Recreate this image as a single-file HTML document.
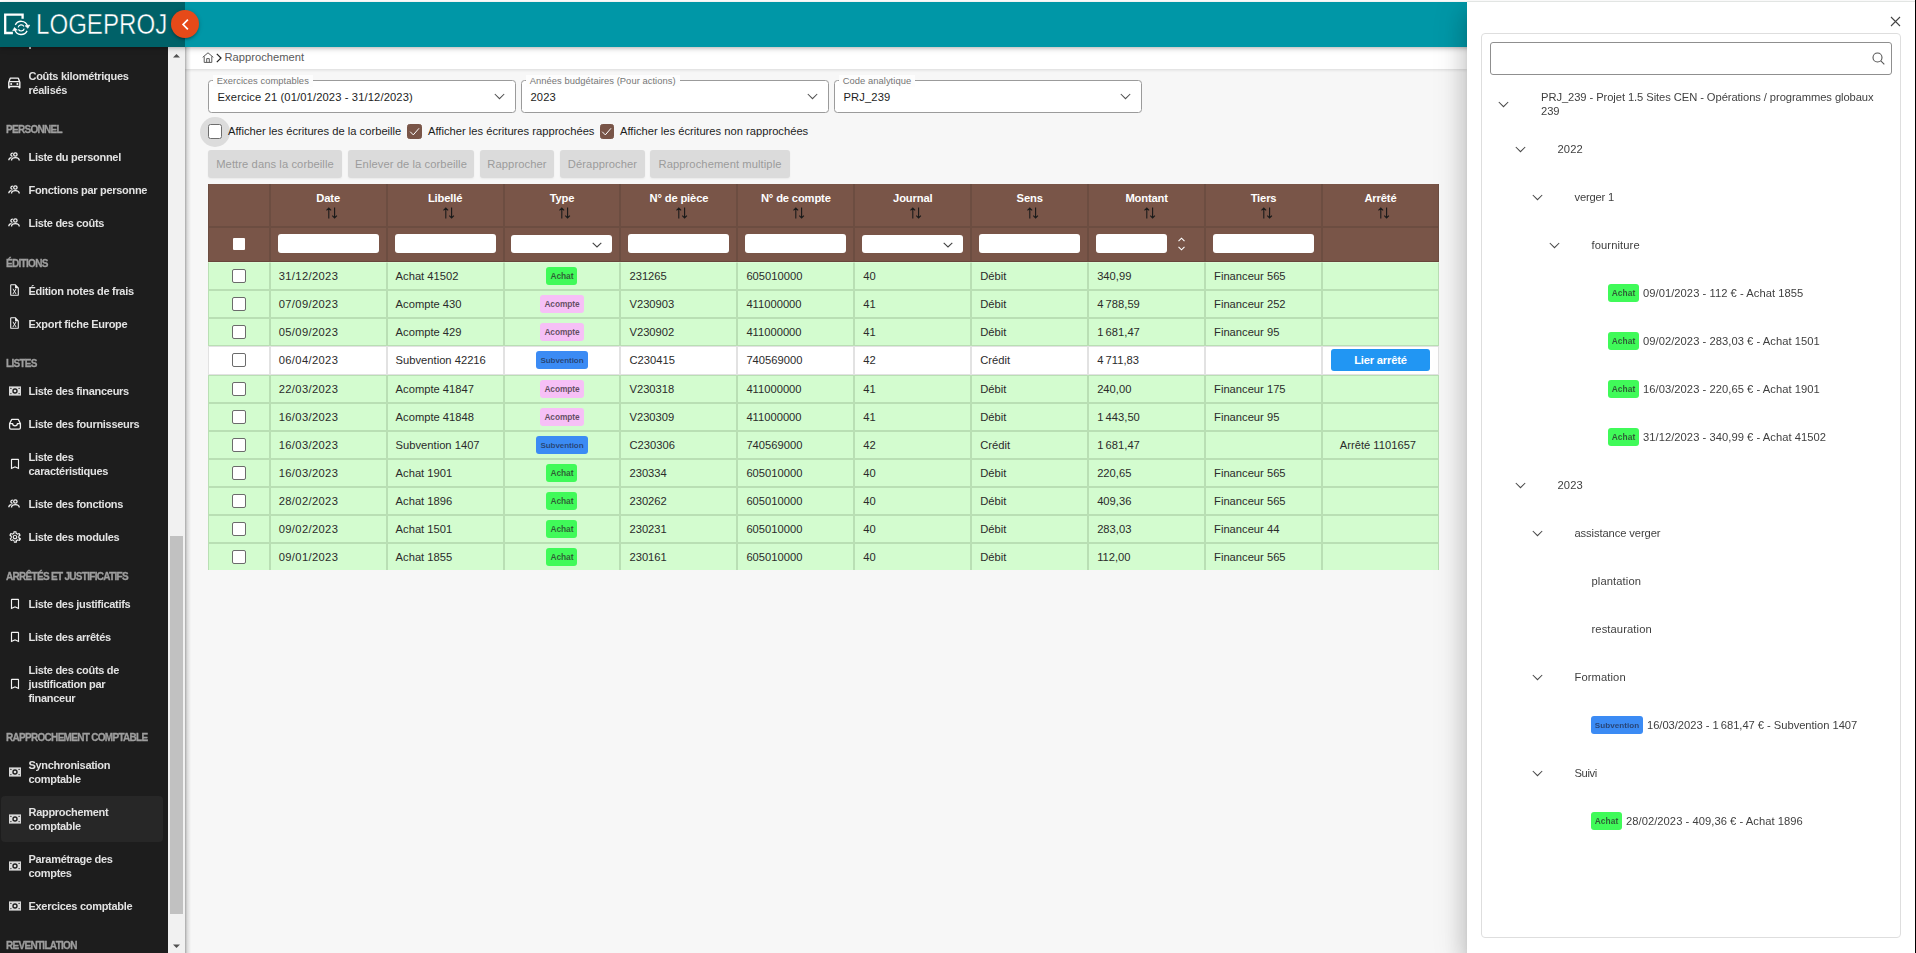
<!DOCTYPE html>
<html lang="fr">
<head>
<meta charset="utf-8">
<title>LOGEPROJ - Rapprochement</title>
<style>
*{box-sizing:border-box}
html,body{margin:0;padding:0}
body{width:1916px;height:953px;overflow:hidden;position:relative;background:#fff;
  font-family:"Liberation Sans",sans-serif;font-size:11.2px;color:#1d1d1d;line-height:1.2}
svg{display:block}
.abs{position:absolute}
/* ---------- top strip / right edge ---------- */
#topline{position:absolute;left:1467px;top:1px;width:448px;height:1px;background:#e2e5e3;z-index:50}
#rightedge{position:absolute;left:1915px;top:0;width:1px;height:953px;background:#000;z-index:60}
/* ---------- header ---------- */
#header{position:absolute;left:0;top:2px;width:1916px;height:45px;background:#0097a7;z-index:20;
  box-shadow:0 1px 3px rgba(0,0,0,.16),0 3px 5px rgba(0,0,0,.09),0 1px 8px rgba(0,0,0,.07)}
#logo{position:absolute;left:0;top:0;width:185px;height:45px;background:#006168}
#logotext{position:absolute;left:36px;top:5.3px;font-size:30px;line-height:34px;color:#fff;white-space:nowrap;
  transform-origin:0 50%;transform:scaleX(.803);-webkit-text-stroke:.45px #006168;letter-spacing:0}
#collapse{position:absolute;left:171px;top:10px;width:28px;height:28px;border-radius:50%;background:#e64a19;z-index:25;
  box-shadow:0 1px 5px rgba(0,0,0,.2),0 2px 2px rgba(0,0,0,.14),0 3px 1px -2px rgba(0,0,0,.12)}
/* ---------- sidebar ---------- */
#sidebar{position:absolute;left:0;top:47px;width:168px;height:906px;background:#1d1d1d;overflow:hidden;z-index:10;color:#eee}
#sbscroll{position:absolute;left:168px;top:47px;width:17px;height:906px;background:#f1f1f1;z-index:10}
#sbthumb{position:absolute;left:2px;top:489px;width:13px;height:378px;background:#c1c1c1}
.it{position:relative;display:flex;align-items:center;height:33.1px;padding-left:28.5px;font-weight:bold;font-size:11px;letter-spacing:-.3px;line-height:14px;color:#e2e2e2}
.it.l2{height:47.1px}.it.l3{height:61.1px}
.it svg{position:absolute;left:7.5px;top:50%;margin-top:-7px;width:14px;height:14px;fill:#f2f2f2}
.hd{height:33.8px;padding:17px 0 0 6px;font-weight:bold;font-size:10px;letter-spacing:-.7px;color:#9e9e9e;-webkit-text-stroke:.3px #9e9e9e;line-height:12px;white-space:nowrap}
.it.sel::before{content:"";position:absolute;left:.5px;top:1px;right:5px;bottom:1px;background:#272727;border-radius:4px;z-index:-1}
/* ---------- main ---------- */
#main{position:absolute;left:185px;top:47px;width:1282px;height:906px;background:#f7f7f7;z-index:5;
}
#mainshade{position:absolute;left:185px;top:47px;width:6px;height:906px;z-index:8;background:linear-gradient(90deg,rgba(0,0,0,.32),rgba(0,0,0,.12) 35%,rgba(0,0,0,0))}
#crumb{position:absolute;left:0;top:0;width:1282px;height:22px;background:#fff;box-shadow:0 1px 3px rgba(0,0,0,.12);
  }
#crumb .t{position:absolute;left:39.5px;top:4px;font-size:11.2px;color:#5a5a5a;line-height:13px}
.field{position:absolute;top:33px;height:32.5px;border:1px solid #9b9b9b;border-radius:3.5px;background:#fff}
.field .lab{position:absolute;left:3.7px;top:-6.5px;height:12px;padding:0 4px;background:#fdfdfd;font-size:9.4px;line-height:12px;color:#767676;white-space:nowrap;letter-spacing:.05px}
.field .val{position:absolute;left:8.5px;top:8.5px;line-height:14px;font-size:11.2px;color:#1d1d1d;white-space:nowrap;letter-spacing:.12px}
.field svg{position:absolute;right:10.3px;top:11.5px;width:11px;height:7px}
.cb{position:absolute;top:77.2px;width:14px;height:14.6px;border:1.4px solid #6e6e6e;border-radius:2.5px;background:#fff}
.cb.on{background:#795548;border-color:#795548}
.cb.on svg{position:absolute;left:-.5px;top:-.5px;width:13px;height:13px}
.cbl{position:absolute;top:76.6px;line-height:14px;font-size:11.2px;color:#1d1d1d;white-space:nowrap}
#halo{position:absolute;left:15px;top:69.5px;width:30px;height:30px;border-radius:50%;background:#dcdcdc}
.btn{position:absolute;top:103px;height:28px;border-radius:3px;background:#dbdbdb;color:#9c9c9c;font-size:11.2px;line-height:28px;text-align:center;white-space:nowrap;letter-spacing:.08px;
  box-shadow:0 1px 2px rgba(0,0,0,.06)}
/* ---------- table ---------- */
#tbl{position:absolute;left:23.2px;top:137px;width:1230.8px;display:grid;grid-template-columns:61.5px repeat(10,116.93px);font-size:11.2px}
#tbl>div{overflow:hidden;white-space:nowrap;min-width:0}
.th{background:#795548;color:#fff;border:1px solid #6c4d41;border-top:none;font-weight:bold;text-align:center;letter-spacing:-.15px}
.th.h1{height:43px;padding-top:8px;line-height:13px}
.th.h2{height:35px;border-top:1px solid #6c4d41;border-bottom-color:#68463b;display:flex;align-items:center;justify-content:center;padding-bottom:2px}
.srt{margin:2px auto 0;width:12px;height:12px;position:relative;left:3.5px}
.fi{display:block;width:101px;height:19px;background:#fff;border-radius:3px;position:relative}
.fi svg{position:absolute;right:10.5px;top:6.5px;width:10px;height:6px}
.td{height:28px;background:#d3fccf;border:1px solid #b9dfb4;padding-left:8px;color:#2b2b2b;line-height:14px;display:flex;align-items:center;padding-top:.5px}
.td.first{border-top-color:#dbfdd8}
.td.w{background:#fff;height:29px;border-color:#e2e2e2;padding-top:0;padding-bottom:1px}
.td.lastrow{border-bottom:none;height:27px}
.td.c{padding-left:0;justify-content:center}
.rcb{display:block;width:14px;height:14px;border:1px solid #6b6b6b;border-radius:2px;background:#fff}
.dt{letter-spacing:.36px}
.hcb{display:block;width:12px;height:12px;background:#fff;border-radius:1px}
.bdg{display:inline-block;height:18px;line-height:19px;border-radius:3px;font-size:8.4px;font-weight:bold;color:rgba(40,30,40,.72);padding:0 5px;vertical-align:middle;letter-spacing:-.1px}
.bdg.a{background:#40fa59;width:31px;padding:0;text-align:center}
.bdg.c{background:#f6c0f6;width:44px;padding:0;text-align:center}
.bdg.s{background:#3b8bf4;width:52px;padding:0;text-align:center;font-size:8.1px;color:rgba(30,30,50,.66)}
.lier{display:block;width:99px;height:22px;line-height:22px;border-radius:3px;background:#2196f3;color:#fff;font-weight:bold;font-size:11.2px;text-align:center;letter-spacing:-.2px}
/* ---------- right panel ---------- */
#panel{position:absolute;left:1467px;top:2px;width:448px;height:951px;background:#fff;z-index:30;
  box-shadow:0 8px 10px -5px rgba(0,0,0,.2),0 16px 24px 2px rgba(0,0,0,.14),0 6px 30px 5px rgba(0,0,0,.12);clip-path:inset(0 0 0 -60px)}
#pinner{position:absolute;left:0;top:0;width:448px;height:951px;will-change:transform}
#card{position:absolute;left:13.7px;top:31px;width:420.6px;height:905px;border:1px solid #dedede;border-radius:4px}
#search{position:absolute;left:8.4px;top:7.7px;width:401.7px;height:33.3px;border:1px solid #8f8f8f;border-radius:3px}
.tr{position:absolute;white-space:nowrap;color:#3f3f3f;font-size:11.2px;line-height:14px;letter-spacing:.1px}
.tr.lf span{letter-spacing:.04px}
.tr.lf{display:flex;align-items:center;height:18px}
.chev{position:absolute;width:11px;height:7px}
.tr .bdg{margin-right:4px;letter-spacing:-.1px;flex:none}
</style>
</head>
<body>
<div id="topline"></div>
<div id="rightedge"></div>

<div id="header">
  <div id="logo">
    <svg class="abs" style="left:0;top:0" width="34" height="45" viewBox="0 0 34 45" fill="none" stroke="#fff">
      <path d="M22.600 16.800V12.600H5.200V31H12.900" stroke-width="2.300"/>
      <g stroke-width="1.350" transform="rotate(-8 21.200 25.900)">
        <path d="M15.790 22.110A6.600 6.600 0 0 1 27.700 24.750"/><path d="M26.610 29.690A6.600 6.600 0 0 1 14.700 27.050"/>
        <path d="M25.300 24.300h4.800l-2.300 3z" fill="#fff" stroke-width=".5"/><path d="M17.100 27.500h-4.800l2.300-3z" fill="#fff" stroke-width=".5"/>
        <path d="M18.290 24.840A3.100 3.100 0 0 1 24.110 24.840M24.110 26.960A3.100 3.100 0 0 1 18.290 26.960" stroke-width="1.200"/>
      </g>
    </svg>
    <div id="logotext">LOGEPROJ</div>
  </div>
</div>
<div id="collapse"><svg class="abs" style="left:8.3px;top:8.4px" width="13" height="13" viewBox="0 0 12 12" fill="none" stroke="#fff" stroke-width="1.6"><path d="M8.2 1.6L3.8 6l4.4 4.400"/></svg></div>

<div id="sidebar">
<div style="position:absolute;left:0;top:12px;width:168px;z-index:0;will-change:transform">
<div class="abs" style="left:28.5px;top:-23px;font-weight:bold;font-size:11px;letter-spacing:-.3px;line-height:14px;color:#e2e2e2">personne</div>
<div class="it l2" style="height:47.7px"><svg viewBox="0 0 24 24" style="width:16.6px;height:16.6px;left:6.2px;margin-top:-8.6px"><path d="M18.9 6c-.2-.6-.8-1-1.4-1h-11c-.7 0-1.200.4-1.400 1L3 12v8c0 .6.400 1 1 1h1c.6 0 1-.4 1-1v-1h12v1c0 .6.400 1 1 1h1c.6 0 1-.4 1-1v-8l-2.100-6zM6.800 7h10.300l1.100 3H5.800l1-3zM19 17H5v-5h14v5z"/><circle cx="7.500" cy="14.500" r="1.500"/><circle cx="16.500" cy="14.500" r="1.500"/></svg><span>Coûts kilométriques<br>réalisés</span></div>
<div class="hd" style="height:33.5px">PERSONNEL</div>
<div class="it"><svg viewBox="0 0 14 14" style="fill:none;stroke:#f0f0f0;stroke-width:1.45;width:12.6px;height:12.6px;left:8.4px;margin-top:-6.5px"><circle cx="8.200" cy="5" r="1.900"/><path d="M3.900 11.600C3.900 9.600 5.600 8.400 8.200 8.400s4.300 1.200 4.300 3.200"/><path d="M5.300 3.700a1.600 1.600 0 1 0-.2 3.100M.9 11.300C.9 9.700 2 8.700 4 8.500"/></svg><span>Liste du personnel</span></div>
<div class="it"><svg viewBox="0 0 14 14" style="fill:none;stroke:#f0f0f0;stroke-width:1.45;width:12.6px;height:12.6px;left:8.4px;margin-top:-6.5px"><circle cx="8.200" cy="5" r="1.900"/><path d="M3.900 11.600C3.900 9.600 5.600 8.400 8.200 8.400s4.300 1.200 4.300 3.200"/><path d="M5.300 3.700a1.600 1.600 0 1 0-.2 3.100M.9 11.300C.9 9.700 2 8.700 4 8.500"/></svg><span>Fonctions par personne</span></div>
<div class="it"><svg viewBox="0 0 14 14" style="fill:none;stroke:#f0f0f0;stroke-width:1.45;width:12.6px;height:12.6px;left:8.4px;margin-top:-6.5px"><circle cx="8.200" cy="5" r="1.900"/><path d="M3.900 11.600C3.900 9.600 5.600 8.400 8.200 8.400s4.300 1.200 4.300 3.200"/><path d="M5.300 3.700a1.600 1.600 0 1 0-.2 3.100M.9 11.300C.9 9.700 2 8.700 4 8.500"/></svg><span>Liste des coûts</span></div>
<div class="hd" style="height:34.6px;padding-top:18.9px">ÉDITIONS</div>
<div class="it"><svg viewBox="0 0 24 24" preserveAspectRatio="none" style="width:13px;left:8px;margin-top:-8px"><path d="M14 2H6a2 2 0 0 0-2 2v16a2 2 0 0 0 2 2h12a2 2 0 0 0 2-2V8l-6-6zm4 18H6V4h7v5h5v11zm-5.100-5.500l2.900 4.500H14l-2-3.400-2 3.400H8.200l2.900-4.500L8.200 10H10l2 3.400 2-3.400h1.800l-2.900 4.500z"/></svg><span>Édition notes de frais</span></div>
<div class="it"><svg viewBox="0 0 24 24" preserveAspectRatio="none" style="width:13px;left:8px;margin-top:-8px"><path d="M14 2H6a2 2 0 0 0-2 2v16a2 2 0 0 0 2 2h12a2 2 0 0 0 2-2V8l-6-6zm4 18H6V4h7v5h5v11zm-5.100-5.500l2.900 4.500H14l-2-3.400-2 3.400H8.200l2.900-4.500L8.200 10H10l2 3.400 2-3.400h1.800l-2.900 4.500z"/></svg><span>Export fiche Europe</span></div>
<div class="hd" style="padding-top:18px">LISTES</div>
<div class="it"><svg viewBox="0 0 14 14" style="fill:#dadada"><path d="M1 2.400h12v9.200H1z"/><circle cx="7" cy="7" r="2.700" fill="#1d1d1d"/><circle cx="7" cy="7" r="1.300"/><circle cx="2.900" cy="4.400" r=".65" fill="#1d1d1d"/><circle cx="11.100" cy="4.400" r=".65" fill="#1d1d1d"/><circle cx="2.900" cy="9.600" r=".65" fill="#1d1d1d"/><circle cx="11.100" cy="9.600" r=".65" fill="#1d1d1d"/></svg><span>Liste des financeurs</span></div>
<div class="it"><svg viewBox="0 0 14 14" style="fill:none;stroke:#f0f0f0;stroke-width:1.3;stroke-linejoin:round"><path d="M1.600 6.600v4.200a1.300 1.300 0 0 0 1.300 1.300h8.200a1.300 1.300 0 0 0 1.300-1.300V6.600L10.200 2.300H3.800L1.600 6.600h3c0 1.300 1 2.200 2.400 2.200s2.400-.9 2.400-2.200h3"/></svg><span>Liste des fournisseurs</span></div>
<div class="it l2"><svg viewBox="0 0 24 24"><path d="M17 3H7c-1.100 0-2 .9-2 2v16l7-3 7 3V5c0-1.100-.9-2-2-2zm0 15l-5-2.180L7 18V5h10v13z"/></svg><span>Liste des<br>caractéristiques</span></div>
<div class="it"><svg viewBox="0 0 14 14" style="fill:none;stroke:#f0f0f0;stroke-width:1.45;width:12.6px;height:12.6px;left:8.4px;margin-top:-6.5px"><circle cx="8.200" cy="5" r="1.900"/><path d="M3.900 11.600C3.900 9.600 5.600 8.400 8.200 8.400s4.300 1.200 4.300 3.200"/><path d="M5.300 3.700a1.600 1.600 0 1 0-.2 3.100M.9 11.300C.9 9.700 2 8.700 4 8.500"/></svg><span>Liste des fonctions</span></div>
<div class="it"><svg viewBox="0 0 24 24"><path d="M19.430 12.980c.040-.320.070-.640.070-.980s-.030-.660-.070-.980l2.110-1.650c.190-.150.240-.420.120-.640l-2-3.460a.500.500 0 0 0-.610-.220l-2.490 1c-.520-.400-1.080-.730-1.690-.980l-.380-2.650A.488.488 0 0 0 14 2h-4c-.250 0-.460.180-.490.420l-.380 2.650c-.610.250-1.170.590-1.690.980l-2.490-1a.566.566 0 0 0-.180-.030c-.170 0-.340.090-.430.250l-2 3.460c-.130.220-.070.490.12.640l2.110 1.650c-.04.320-.07.650-.07.980s.3.660.7.980l-2.110 1.650c-.19.150-.24.420-.12.640l2 3.460a.500.500 0 0 0 .610.220l2.490-1c.520.400 1.080.730 1.690.980l.380 2.650c.3.240.240.420.490.420h4c.250 0 .460-.180.490-.420l.380-2.650c.610-.250 1.170-.590 1.690-.980l2.490 1c.6.020.120.030.180.030.170 0 .340-.9.430-.250l2-3.460c.120-.220.070-.490-.12-.640l-2.110-1.650zm-1.980-1.710c.4.310.5.520.5.730s-.2.430-.5.730l-.14 1.130.89.700 1.080.84-.7 1.210-1.270-.510-1.040-.420-.9.680c-.430.320-.840.560-1.250.730l-1.060.430-.16 1.130-.2 1.350h-1.400l-.190-1.350-.16-1.130-1.060-.430c-.430-.180-.830-.410-1.230-.710l-.910-.7-1.060.430-1.270.510-.7-1.210 1.080-.840.890-.7-.14-1.130c-.030-.310-.050-.540-.050-.740s.02-.430.050-.730l.14-1.130-.89-.7-1.080-.840.7-1.210 1.270.510 1.040.420.900-.680c.430-.320.840-.560 1.250-.730l1.060-.430.160-1.130.2-1.350h1.390l.19 1.350.16 1.130 1.060.430c.430.180.830.410 1.230.710l.910.700 1.060-.430 1.270-.510.700 1.210-1.070.850-.89.700.14 1.130zM12 8c-2.210 0-4 1.790-4 4s1.790 4 4 4 4-1.790 4-4-1.790-4-4-4zm0 6c-1.100 0-2-.9-2-2s.9-2 2-2 2 .9 2 2-.9 2-2 2z"/></svg><span>Liste des modules</span></div>
<div class="hd">ARRÊTÉS ET JUSTIFICATIFS</div>
<div class="it"><svg viewBox="0 0 24 24"><path d="M17 3H7c-1.100 0-2 .9-2 2v16l7-3 7 3V5c0-1.100-.9-2-2-2zm0 15l-5-2.180L7 18V5h10v13z"/></svg><span>Liste des justificatifs</span></div>
<div class="it"><svg viewBox="0 0 24 24"><path d="M17 3H7c-1.100 0-2 .9-2 2v16l7-3 7 3V5c0-1.100-.9-2-2-2zm0 15l-5-2.180L7 18V5h10v13z"/></svg><span>Liste des arrêtés</span></div>
<div class="it l3"><svg viewBox="0 0 24 24"><path d="M17 3H7c-1.100 0-2 .9-2 2v16l7-3 7 3V5c0-1.100-.9-2-2-2zm0 15l-5-2.180L7 18V5h10v13z"/></svg><span>Liste des coûts de<br>justification par<br>financeur</span></div>
<div class="hd">RAPPROCHEMENT COMPTABLE</div>
<div class="it l2"><svg viewBox="0 0 14 14" style="fill:#dadada"><path d="M1 2.400h12v9.200H1z"/><circle cx="7" cy="7" r="2.700" fill="#1d1d1d"/><circle cx="7" cy="7" r="1.300"/><circle cx="2.900" cy="4.400" r=".65" fill="#1d1d1d"/><circle cx="11.100" cy="4.400" r=".65" fill="#1d1d1d"/><circle cx="2.900" cy="9.600" r=".65" fill="#1d1d1d"/><circle cx="11.100" cy="9.600" r=".65" fill="#1d1d1d"/></svg><span>Synchronisation<br>comptable</span></div>
<div class="it l2 sel"><svg viewBox="0 0 14 14" style="fill:#dadada"><path d="M1 2.400h12v9.200H1z"/><circle cx="7" cy="7" r="2.700" fill="#1d1d1d"/><circle cx="7" cy="7" r="1.300"/><circle cx="2.900" cy="4.400" r=".65" fill="#1d1d1d"/><circle cx="11.100" cy="4.400" r=".65" fill="#1d1d1d"/><circle cx="2.900" cy="9.600" r=".65" fill="#1d1d1d"/><circle cx="11.100" cy="9.600" r=".65" fill="#1d1d1d"/></svg><span>Rapprochement<br>comptable</span></div>
<div class="it l2"><svg viewBox="0 0 14 14" style="fill:#dadada"><path d="M1 2.400h12v9.200H1z"/><circle cx="7" cy="7" r="2.700" fill="#1d1d1d"/><circle cx="7" cy="7" r="1.300"/><circle cx="2.900" cy="4.400" r=".65" fill="#1d1d1d"/><circle cx="11.100" cy="4.400" r=".65" fill="#1d1d1d"/><circle cx="2.900" cy="9.600" r=".65" fill="#1d1d1d"/><circle cx="11.100" cy="9.600" r=".65" fill="#1d1d1d"/></svg><span>Paramétrage des<br>comptes</span></div>
<div class="it"><svg viewBox="0 0 14 14" style="fill:#dadada"><path d="M1 2.400h12v9.200H1z"/><circle cx="7" cy="7" r="2.700" fill="#1d1d1d"/><circle cx="7" cy="7" r="1.300"/><circle cx="2.900" cy="4.400" r=".65" fill="#1d1d1d"/><circle cx="11.100" cy="4.400" r=".65" fill="#1d1d1d"/><circle cx="2.900" cy="9.600" r=".65" fill="#1d1d1d"/><circle cx="11.100" cy="9.600" r=".65" fill="#1d1d1d"/></svg><span>Exercices comptable</span></div>
<div class="hd">REVENTILATION</div>
</div></div>
<div id="sbscroll">
  <svg class="abs" style="left:5px;top:7px" width="7" height="4" viewBox="0 0 9 5" preserveAspectRatio="none"><path d="M0 4.5L4.5 0 9 4.5z" fill="#505050"/></svg>
  <div id="sbthumb"></div>
  <svg class="abs" style="left:5px;top:897px" width="7" height="4" viewBox="0 0 9 5" preserveAspectRatio="none"><path d="M0 .5L4.5 5 9 .5z" fill="#505050"/></svg>
</div>

<div id="mainshade"></div>
<div id="main">
<div id="crumb">
<svg class="abs" style="left:17px;top:5px" width="12" height="11" viewBox="0 0 12 11" fill="none" stroke="#5a5a5a" stroke-width="1"><path d="M.7 5.300L6 .8l5.300 4.500M2.200 4.400v6h7.600v-6M4.700 10.400V6.600h2.600v3.800"/></svg>
<svg class="abs" style="left:31px;top:5.500px" width="6" height="10" viewBox="0 0 6 10" fill="none" stroke="#222" stroke-width="1.2"><path d="M.8.800L5 5 .8 9.200"/></svg>
<div class="t">Rapprochement</div>
</div>
<div class="field" style="left:23px;width:308px"><div class="lab">Exercices comptables</div><div class="val">Exercice 21 (01/01/2023 - 31/12/2023)</div><svg viewBox="0 0 11 7" fill="none" stroke="#505050" stroke-width="1.05"><path d="M.8 1l4.700 4.700L10.200 1"/></svg></div>
<div class="field" style="left:336px;width:308px"><div class="lab">Années budgétaires (Pour actions)</div><div class="val">2023</div><svg viewBox="0 0 11 7" fill="none" stroke="#505050" stroke-width="1.05"><path d="M.8 1l4.700 4.700L10.200 1"/></svg></div>
<div class="field" style="left:649px;width:308px"><div class="lab">Code analytique</div><div class="val">PRJ_239</div><svg viewBox="0 0 11 7" fill="none" stroke="#505050" stroke-width="1.05"><path d="M.8 1l4.700 4.700L10.200 1"/></svg></div>
<div id="halo"></div>
<div class="cb" style="left:23px"></div><div class="cbl" style="left:43px">Afficher les écritures de la corbeille</div>
<div class="cb on" style="left:222px;width:14.600px"><svg viewBox="0 0 13 13" fill="none" stroke="#fff" stroke-width="1"><path d="M2.200 6.700l3.100 3.200 5.700-6.600"/></svg></div><div class="cbl" style="left:243px">Afficher les écritures rapprochées</div>
<div class="cb on" style="left:414.500px"><svg viewBox="0 0 13 13" fill="none" stroke="#fff" stroke-width="1"><path d="M2.200 6.700l3.100 3.200 5.700-6.600"/></svg></div><div class="cbl" style="left:435px">Afficher les écritures non rapprochées</div>
<div class="btn" style="left:23px;width:134px">Mettre dans la corbeille</div>
<div class="btn" style="left:163px;width:126px">Enlever de la corbeille</div>
<div class="btn" style="left:295px;width:74px">Rapprocher</div>
<div class="btn" style="left:375px;width:85px">Dérapprocher</div>
<div class="btn" style="left:465px;width:140px">Rapprochement multiple</div>
<div id="tbl">
<div class="th h1"></div>
<div class="th h1">Date<svg class="srt" viewBox="0 0 12 12" fill="none" stroke="#1a1a1a" stroke-width="1.1"><path d="M2.800 11.500V1M.5 3.400L2.800 1l2.300 2.400M8.600.5V11M6.300 8.600L8.600 11l2.300-2.400"/></svg></div>
<div class="th h1">Libellé<svg class="srt" viewBox="0 0 12 12" fill="none" stroke="#1a1a1a" stroke-width="1.1"><path d="M2.800 11.500V1M.5 3.400L2.800 1l2.300 2.400M8.600.5V11M6.300 8.600L8.600 11l2.300-2.400"/></svg></div>
<div class="th h1">Type<svg class="srt" viewBox="0 0 12 12" fill="none" stroke="#1a1a1a" stroke-width="1.1"><path d="M2.800 11.500V1M.5 3.400L2.800 1l2.300 2.400M8.600.5V11M6.300 8.600L8.600 11l2.300-2.400"/></svg></div>
<div class="th h1">N° de pièce<svg class="srt" viewBox="0 0 12 12" fill="none" stroke="#1a1a1a" stroke-width="1.1"><path d="M2.800 11.500V1M.5 3.400L2.800 1l2.300 2.400M8.600.5V11M6.300 8.600L8.600 11l2.300-2.400"/></svg></div>
<div class="th h1">N° de compte<svg class="srt" viewBox="0 0 12 12" fill="none" stroke="#1a1a1a" stroke-width="1.1"><path d="M2.800 11.500V1M.5 3.400L2.800 1l2.300 2.400M8.600.5V11M6.300 8.600L8.600 11l2.300-2.400"/></svg></div>
<div class="th h1">Journal<svg class="srt" viewBox="0 0 12 12" fill="none" stroke="#1a1a1a" stroke-width="1.1"><path d="M2.800 11.500V1M.5 3.400L2.800 1l2.300 2.400M8.600.5V11M6.300 8.600L8.600 11l2.300-2.400"/></svg></div>
<div class="th h1">Sens<svg class="srt" viewBox="0 0 12 12" fill="none" stroke="#1a1a1a" stroke-width="1.1"><path d="M2.800 11.500V1M.5 3.400L2.800 1l2.300 2.400M8.600.5V11M6.300 8.600L8.600 11l2.300-2.400"/></svg></div>
<div class="th h1">Montant<svg class="srt" viewBox="0 0 12 12" fill="none" stroke="#1a1a1a" stroke-width="1.1"><path d="M2.800 11.500V1M.5 3.400L2.800 1l2.300 2.400M8.600.5V11M6.300 8.600L8.600 11l2.300-2.400"/></svg></div>
<div class="th h1">Tiers<svg class="srt" viewBox="0 0 12 12" fill="none" stroke="#1a1a1a" stroke-width="1.1"><path d="M2.800 11.500V1M.5 3.400L2.800 1l2.300 2.400M8.600.5V11M6.300 8.600L8.600 11l2.300-2.400"/></svg></div>
<div class="th h1 last">Arrêté<svg class="srt" viewBox="0 0 12 12" fill="none" stroke="#1a1a1a" stroke-width="1.1"><path d="M2.800 11.500V1M.5 3.400L2.800 1l2.300 2.400M8.600.5V11M6.300 8.600L8.600 11l2.300-2.400"/></svg></div>
<div class="th h2"><span class="hcb"></span></div>
<div class="th h2"><span class="fi"></span></div>
<div class="th h2"><span class="fi"></span></div>
<div class="th h2"><span class="fi" style="height:18px;top:.5px"><svg viewBox="0 0 10 6" fill="none" stroke="#444" stroke-width="1.1"><path d="M.7.8l4.300 4.200L9.300.8"/></svg></span></div>
<div class="th h2"><span class="fi"></span></div>
<div class="th h2"><span class="fi"></span></div>
<div class="th h2"><span class="fi" style="height:18px;top:.5px"><svg viewBox="0 0 10 6" fill="none" stroke="#444" stroke-width="1.1"><path d="M.7.8l4.300 4.200L9.300.8"/></svg></span></div>
<div class="th h2"><span class="fi"></span></div>
<div class="th h2" style="justify-content:flex-start;padding-left:7.200px"><span class="fi" style="width:70.5px"><svg style="position:absolute;left:82px;top:2.500px;width:7px;height:14px;right:auto" viewBox="0 0 7 14" fill="none" stroke="#fff" stroke-width="1.100"><path d="M.5 4.200L3.500 1.200 6.500 4.200M.5 9.800l3 3L6.500 9.800"/></svg></span></div>
<div class="th h2"><span class="fi"></span></div>
<div class="th h2 last"></div>
<div class="td c first"><span class="rcb"></span></div>
<div class="td first"><span class="dt">31/12/2023</span></div>
<div class="td first">Achat 41502</div>
<div class="td c first"><span class="bdg a">Achat</span></div>
<div class="td first">231265</div>
<div class="td first">605010000</div>
<div class="td first">40</div>
<div class="td first">Débit</div>
<div class="td first">340,99</div>
<div class="td first">Financeur 565</div>
<div class="td c first last" style="padding-right:5px"></div>
<div class="td c"><span class="rcb"></span></div>
<div class="td"><span class="dt">07/09/2023</span></div>
<div class="td">Acompte 430</div>
<div class="td c"><span class="bdg c">Acompte</span></div>
<div class="td">V230903</div>
<div class="td">411000000</div>
<div class="td">41</div>
<div class="td">Débit</div>
<div class="td">4&#8239;788,59</div>
<div class="td">Financeur 252</div>
<div class="td c last" style="padding-right:5px"></div>
<div class="td c"><span class="rcb"></span></div>
<div class="td"><span class="dt">05/09/2023</span></div>
<div class="td">Acompte 429</div>
<div class="td c"><span class="bdg c">Acompte</span></div>
<div class="td">V230902</div>
<div class="td">411000000</div>
<div class="td">41</div>
<div class="td">Débit</div>
<div class="td">1&#8239;681,47</div>
<div class="td">Financeur 95</div>
<div class="td c last" style="padding-right:5px"></div>
<div class="td c w"><span class="rcb"></span></div>
<div class="td w"><span class="dt">06/04/2023</span></div>
<div class="td w">Subvention 42216</div>
<div class="td c w"><span class="bdg s">Subvention</span></div>
<div class="td w">C230415</div>
<div class="td w">740569000</div>
<div class="td w">42</div>
<div class="td w">Crédit</div>
<div class="td w">4&#8239;711,83</div>
<div class="td w"></div>
<div class="td c w last"><span class="lier">Lier arrêté</span></div>
<div class="td c"><span class="rcb"></span></div>
<div class="td"><span class="dt">22/03/2023</span></div>
<div class="td">Acompte 41847</div>
<div class="td c"><span class="bdg c">Acompte</span></div>
<div class="td">V230318</div>
<div class="td">411000000</div>
<div class="td">41</div>
<div class="td">Débit</div>
<div class="td">240,00</div>
<div class="td">Financeur 175</div>
<div class="td c last" style="padding-right:5px"></div>
<div class="td c"><span class="rcb"></span></div>
<div class="td"><span class="dt">16/03/2023</span></div>
<div class="td">Acompte 41848</div>
<div class="td c"><span class="bdg c">Acompte</span></div>
<div class="td">V230309</div>
<div class="td">411000000</div>
<div class="td">41</div>
<div class="td">Débit</div>
<div class="td">1&#8239;443,50</div>
<div class="td">Financeur 95</div>
<div class="td c last" style="padding-right:5px"></div>
<div class="td c"><span class="rcb"></span></div>
<div class="td"><span class="dt">16/03/2023</span></div>
<div class="td">Subvention 1407</div>
<div class="td c"><span class="bdg s">Subvention</span></div>
<div class="td">C230306</div>
<div class="td">740569000</div>
<div class="td">42</div>
<div class="td">Crédit</div>
<div class="td">1&#8239;681,47</div>
<div class="td"></div>
<div class="td c last" style="padding-right:5px">Arrêté 1101657</div>
<div class="td c"><span class="rcb"></span></div>
<div class="td"><span class="dt">16/03/2023</span></div>
<div class="td">Achat 1901</div>
<div class="td c"><span class="bdg a">Achat</span></div>
<div class="td">230334</div>
<div class="td">605010000</div>
<div class="td">40</div>
<div class="td">Débit</div>
<div class="td">220,65</div>
<div class="td">Financeur 565</div>
<div class="td c last" style="padding-right:5px"></div>
<div class="td c"><span class="rcb"></span></div>
<div class="td"><span class="dt">28/02/2023</span></div>
<div class="td">Achat 1896</div>
<div class="td c"><span class="bdg a">Achat</span></div>
<div class="td">230262</div>
<div class="td">605010000</div>
<div class="td">40</div>
<div class="td">Débit</div>
<div class="td">409,36</div>
<div class="td">Financeur 565</div>
<div class="td c last" style="padding-right:5px"></div>
<div class="td c"><span class="rcb"></span></div>
<div class="td"><span class="dt">09/02/2023</span></div>
<div class="td">Achat 1501</div>
<div class="td c"><span class="bdg a">Achat</span></div>
<div class="td">230231</div>
<div class="td">605010000</div>
<div class="td">40</div>
<div class="td">Débit</div>
<div class="td">283,03</div>
<div class="td">Financeur 44</div>
<div class="td c last" style="padding-right:5px"></div>
<div class="td c lastrow"><span class="rcb"></span></div>
<div class="td lastrow"><span class="dt">09/01/2023</span></div>
<div class="td lastrow">Achat 1855</div>
<div class="td c lastrow"><span class="bdg a">Achat</span></div>
<div class="td lastrow">230161</div>
<div class="td lastrow">605010000</div>
<div class="td lastrow">40</div>
<div class="td lastrow">Débit</div>
<div class="td lastrow">112,00</div>
<div class="td lastrow">Financeur 565</div>
<div class="td c lastrow last" style="padding-right:5px"></div>
</div>
</div>

<div id="panel"><div id="pinner">
<svg class="abs" style="left:422.500px;top:14px" width="11" height="11" viewBox="0 0 11 11" fill="none" stroke="#444" stroke-width="1.1"><path d="M1 1l9 9M10 1l-9 9"/></svg>
<div id="card"><div id="search"><svg class="abs" style="left:381px;top:9px" width="13" height="13" viewBox="0 0 13 13" fill="none" stroke="#555" stroke-width="1.1"><circle cx="5.500" cy="5.500" r="4.500"/><path d="M8.800 8.800l3.500 3.500"/></svg></div></div>
<svg class="chev" style="left:30.5px;top:99.0px" viewBox="0 0 11 7" fill="none" stroke="#484848" stroke-width="1.05"><path d="M.8 1l4.700 4.700L10.200 1"/></svg>
<div class="tr" style="left:74.0px;top:95.0px;top:88px;letter-spacing:-.08px">PRJ_239 - Projet 1.5 Sites CEN - Opérations / programmes globaux<br>239</div>
<svg class="chev" style="left:47.5px;top:144.0px" viewBox="0 0 11 7" fill="none" stroke="#484848" stroke-width="1.05"><path d="M.8 1l4.700 4.700L10.200 1"/></svg>
<div class="tr" style="left:90.5px;top:140.0px;">2022</div>
<svg class="chev" style="left:64.5px;top:192.0px" viewBox="0 0 11 7" fill="none" stroke="#484848" stroke-width="1.05"><path d="M.8 1l4.700 4.700L10.200 1"/></svg>
<div class="tr" style="left:107.5px;top:188.0px;letter-spacing:-0.2px">verger 1</div>
<svg class="chev" style="left:81.5px;top:240.0px" viewBox="0 0 11 7" fill="none" stroke="#484848" stroke-width="1.05"><path d="M.8 1l4.700 4.700L10.200 1"/></svg>
<div class="tr" style="left:124.5px;top:236.0px;">fourniture</div>
<div class="tr lf" style="left:141.0px;top:282.0px;"><span class="bdg a">Achat</span><span>09/01/2023 - 112 € - Achat 1855</span></div>
<div class="tr lf" style="left:141.0px;top:330.0px;"><span class="bdg a">Achat</span><span>09/02/2023 - 283,03 € - Achat 1501</span></div>
<div class="tr lf" style="left:141.0px;top:378.0px;"><span class="bdg a">Achat</span><span>16/03/2023 - 220,65 € - Achat 1901</span></div>
<div class="tr lf" style="left:141.0px;top:426.0px;"><span class="bdg a">Achat</span><span>31/12/2023 - 340,99 € - Achat 41502</span></div>
<svg class="chev" style="left:47.5px;top:480.0px" viewBox="0 0 11 7" fill="none" stroke="#484848" stroke-width="1.05"><path d="M.8 1l4.700 4.700L10.200 1"/></svg>
<div class="tr" style="left:90.5px;top:476.0px;">2023</div>
<svg class="chev" style="left:64.5px;top:528.0px" viewBox="0 0 11 7" fill="none" stroke="#484848" stroke-width="1.05"><path d="M.8 1l4.700 4.700L10.200 1"/></svg>
<div class="tr" style="left:107.5px;top:524.0px;letter-spacing:-0.1px">assistance verger</div>
<div class="tr" style="left:124.5px;top:572.0px;">plantation</div>
<div class="tr" style="left:124.5px;top:620.0px;">restauration</div>
<svg class="chev" style="left:64.5px;top:672.0px" viewBox="0 0 11 7" fill="none" stroke="#484848" stroke-width="1.05"><path d="M.8 1l4.700 4.700L10.200 1"/></svg>
<div class="tr" style="left:107.5px;top:668.0px;">Formation</div>
<div class="tr lf" style="left:124.0px;top:714.0px;"><span class="bdg s">Subvention</span><span><span style="letter-spacing:-.04px">16/03/2023 - 1&#8239;681,47 € - Subvention 1407</span></span></div>
<svg class="chev" style="left:64.5px;top:768.0px" viewBox="0 0 11 7" fill="none" stroke="#484848" stroke-width="1.05"><path d="M.8 1l4.700 4.700L10.200 1"/></svg>
<div class="tr" style="left:107.5px;top:764.0px;letter-spacing:-0.35px">Suivi</div>
<div class="tr lf" style="left:124.0px;top:810.0px;"><span class="bdg a">Achat</span><span>28/02/2023 - 409,36 € - Achat 1896</span></div>
</div></div>
</body>
</html>
